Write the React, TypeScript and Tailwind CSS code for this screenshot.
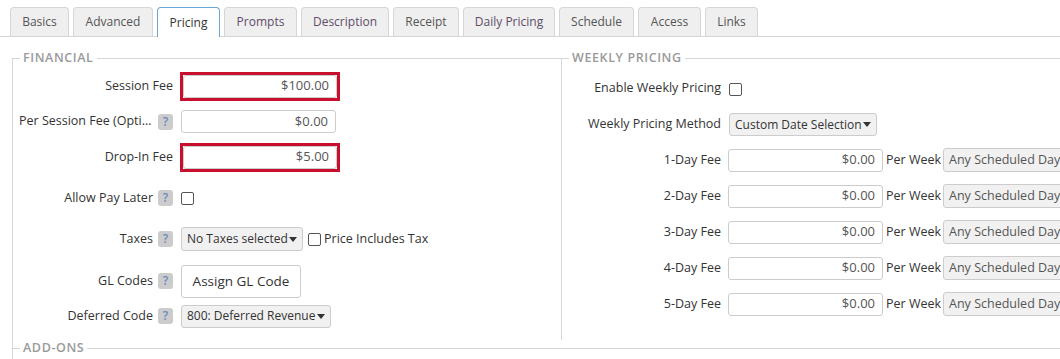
import React from 'react';

const tabs = [
  { label: 'Basics', w: 'w-[59px]', visited: false },
  { label: 'Advanced', w: 'w-[80px]', visited: false },
  { label: 'Pricing', w: 'w-[63px]', visited: false, active: true },
  { label: 'Prompts', w: 'w-[73px]', visited: true },
  { label: 'Description', w: 'w-[88px]', visited: true },
  { label: 'Receipt', w: 'w-[66px]', visited: false },
  { label: 'Daily Pricing', w: 'w-[92px]', visited: true },
  { label: 'Schedule', w: 'w-[75px]', visited: false },
  { label: 'Access', w: 'w-[63px]', visited: false },
  { label: 'Links', w: 'w-[53px]', visited: false },
];

const Caret = () => (
  <svg width="8" height="5" viewBox="0 0 8 5" className="shrink-0">
    <path d="M0 0h8L4 5z" fill="#333" />
  </svg>
);

const Help = () => (
  <span className="w-[15px] h-[16px] rounded-[3px] bg-[#cccccc] text-[#6b8cc0] text-[12px] leading-[16px] font-semibold flex items-center justify-center shrink-0">
    ?
  </span>
);

const Check = () => (
  <span className="block w-[13px] h-[13px] border border-[#555] rounded-[2px] bg-white shrink-0" />
);

const MoneyInput = ({ value, w = 'w-[155px]' }: { value: string; w?: string }) => (
  <div className={`${w} h-[23px] border border-[#ccc] rounded-[3px] bg-white flex items-center justify-end pr-[7px] text-[13px] text-[#555]`}>
    {value}
  </div>
);

const Select = ({ text, w, h = 'h-[23px]' }: { text: string; w: string; h?: string }) => (
  <div className={`${w} ${h} border border-[#ccc] rounded-[3px] bg-[#f1f1f1] flex items-center justify-between pl-[5px] pr-[5px] text-[12px] text-[#333]`}>
    <span className="whitespace-nowrap">{text}</span>
    <Caret />
  </div>
);

const Legend = ({ children }: { children: React.ReactNode }) => (
  <legend className="ml-[7px] px-[3px] text-[12.5px] leading-[16px] font-semibold tracking-[0.6px] text-[#9a9a9a]">
    {children}
  </legend>
);

const FinRow = ({
  label,
  help,
  h,
  truncate,
  children,
}: {
  label: string;
  help?: boolean;
  h: string;
  truncate?: boolean;
  children: React.ReactNode;
}) => (
  <div className={`flex items-center ${h}`}>
    <div className="w-[160px] shrink-0 flex items-center justify-end gap-[5px]">
      <span className={truncate ? 'truncate max-w-[134px]' : 'whitespace-nowrap'}>{label}</span>
      {help && <Help />}
    </div>
    <div className="ml-[8px] flex items-center">{children}</div>
  </div>
);

const WeekRow = ({ label, h, children }: { label: string; h: string; children: React.ReactNode }) => (
  <div className={`flex items-center ${h}`}>
    <div className="w-[159px] shrink-0 text-right whitespace-nowrap">{label}</div>
    <div className="ml-[7px] flex items-center">{children}</div>
  </div>
);

export default function App() {
  return (
    <div className="w-[1060px] h-[359px] overflow-hidden bg-white text-[#333] text-[12.5px] font-['Open_Sans',sans-serif]">
      {/* Tabs */}
      <div className="flex items-end gap-[4px] pl-[10px] h-[37px] border-b border-[#d6d6d6]">
        {tabs.map((t) => (
          <div
            key={t.label}
            className={`${t.w} shrink-0 flex items-center justify-center rounded-t-[4px] border border-b-0 text-[12px] ${
              t.active
                ? 'h-[30px] -mb-px bg-white border-[#6aa6d6] text-[#333]'
                : `h-[29px] bg-[#efefef] border-[#d6d6d6] ${t.visited ? 'text-[#5e4d68]' : 'text-[#555]'}`
            }`}
          >
            {t.label}
          </div>
        ))}
      </div>

      <div className="pl-[12px] pt-[13px]">
        <div className="flex">
          {/* Financial */}
          <fieldset className="w-[549px] h-[298px] shrink-0 border-t border-l border-[#d6d6d6]">
            <Legend>FINANCIAL</Legend>
            <FinRow label="Session Fee" h="h-[40px]">
              <div className="-ml-px border-[3px] border-[#c8102e]">
                <MoneyInput value="$100.00" w="w-[154px]" />
              </div>
            </FinRow>
            <FinRow label="Per Session Fee (Optional)" help truncate h="h-[31px]">
              <MoneyInput value="$0.00" />
            </FinRow>
            <FinRow label="Drop-In Fee" h="h-[40px]">
              <div className="-ml-px border-[3px] border-[#c8102e]">
                <MoneyInput value="$5.00" w="w-[154px]" />
              </div>
            </FinRow>
            <FinRow label="Allow Pay Later" help h="h-[42px]">
              <Check />
            </FinRow>
            <FinRow label="Taxes" help h="h-[40px]">
              <Select text="No Taxes selected" w="w-[122px]" h="h-[24px]" />
              <span className="ml-[5px]">
                <Check />
              </span>
              <span className="ml-[3px] whitespace-nowrap">Price Includes Tax</span>
            </FinRow>
            <FinRow label="GL Codes" help h="h-[44px]">
              <div className="w-[120px] h-[33px] border border-[#ccc] rounded-[3px] bg-white flex items-center justify-center text-[13.5px] text-[#333]">
                Assign GL Code
              </div>
            </FinRow>
            <FinRow label="Deferred Code" help h="h-[26px]">
              <Select text="800: Deferred Revenue" w="w-[150px]" />
            </FinRow>
          </fieldset>

          {/* Weekly pricing */}
          <fieldset className="flex-1 h-[290px] border-t border-l border-[#d6d6d6]">
            <Legend>WEEKLY PRICING</Legend>
            <WeekRow label="Enable Weekly Pricing" h="h-[44px]">
              <span className="ml-px mt-[3px]">
                <Check />
              </span>
            </WeekRow>
            <WeekRow label="Weekly Pricing Method" h="h-[29px]">
              <div className="ml-px">
                <Select text="Custom Date Selection" w="w-[148px]" />
              </div>
            </WeekRow>
            <div className="mt-[3px]">
              {['1-Day Fee', '2-Day Fee', '3-Day Fee', '4-Day Fee', '5-Day Fee'].map((l) => (
                <WeekRow key={l} label={l} h="h-[36px]">
                  <MoneyInput value="$0.00" />
                  <span className="ml-[3px] whitespace-nowrap">Per Week</span>
                  <div className="ml-[2px] w-[140px] h-[24px] border border-[#ccc] rounded-l-[3px] bg-[#f1f1f1] flex items-center pl-[5px] text-[#555] whitespace-nowrap">
                    Any Scheduled Day
                  </div>
                </WeekRow>
              ))}
            </div>
          </fieldset>
        </div>

        {/* Add-ons */}
        <fieldset className="-mt-[8px] h-[40px] border-t border-l border-[#d6d6d6]">
          <Legend>ADD-ONS</Legend>
        </fieldset>
      </div>
    </div>
  );
}
